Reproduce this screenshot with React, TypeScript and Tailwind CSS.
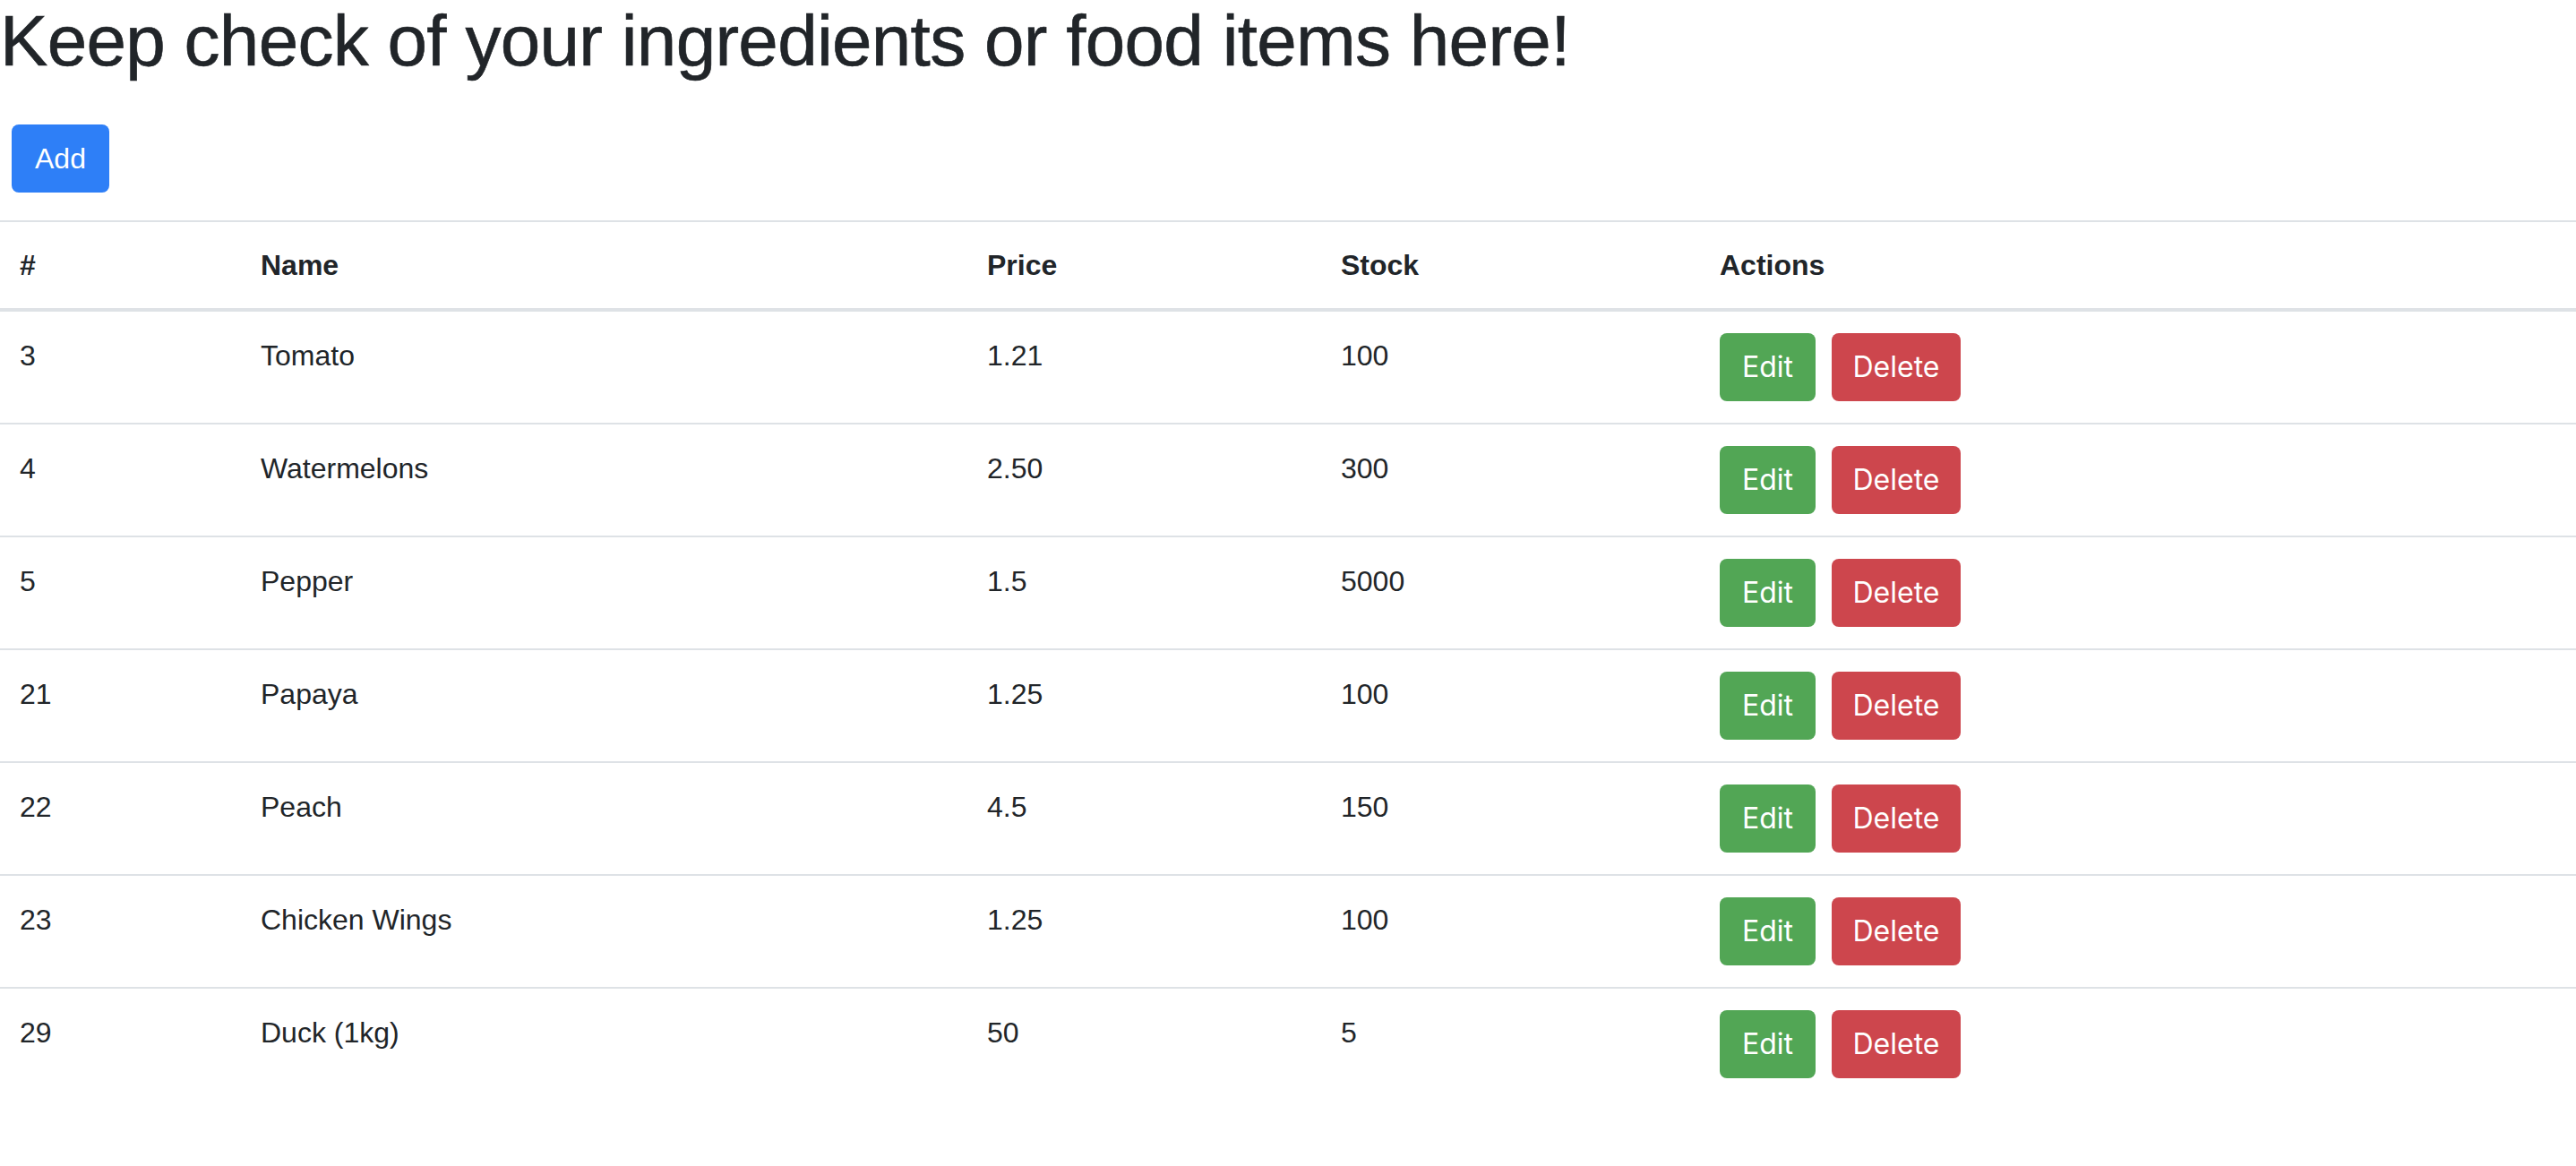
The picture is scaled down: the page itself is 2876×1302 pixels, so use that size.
const items = [
  { id: 3, name: "Tomato", price: "1.21", stock: "100" },
  { id: 4, name: "Watermelons", price: "2.50", stock: "300" },
  { id: 5, name: "Pepper", price: "1.5", stock: "5000" },
  { id: 21, name: "Papaya", price: "1.25", stock: "100" },
  { id: 22, name: "Peach", price: "4.5", stock: "150" },
  { id: 23, name: "Chicken Wings", price: "1.25", stock: "100" },
  { id: 29, name: "Duck (1kg)", price: "50", stock: "5" },
];

export default function App() {
  return (
    <div className="min-h-screen bg-white text-[#212529] font-['Liberation_Sans',Arial,sans-serif]">
      <h1 className="text-[80px] leading-[96px] font-normal mb-[16px] -mt-[2px] tracking-[-0.7px] [-webkit-text-stroke:0.6px_#212529]">
        Keep check of your ingredients or food items here!
      </h1>

      <button className="ml-[13px] mt-[29px] h-[76px] px-[26px] rounded-[8px] bg-[#2e7ff7] text-white text-[32px] leading-[48px]">
        Add
      </button>

      {/* Items table */}
      <table className="mt-[31px] w-full table-fixed border-collapse text-[32px] leading-[48px]">
        <colgroup>
          <col className="w-[267px]" />
          <col className="w-[811px]" />
          <col className="w-[395px]" />
          <col className="w-[423px]" />
          <col />
        </colgroup>
        <thead>
          <tr className="text-left">
            <th className="border-t-2 border-b-4 border-[#dee2e6] px-[22px] py-[24px] font-bold">#</th>
            <th className="border-t-2 border-b-4 border-[#dee2e6] px-[24px] py-[24px] font-bold">Name</th>
            <th className="border-t-2 border-b-4 border-[#dee2e6] px-[24px] py-[24px] font-bold">Price</th>
            <th className="border-t-2 border-b-4 border-[#dee2e6] px-[24px] py-[24px] font-bold">Stock</th>
            <th className="border-t-2 border-b-4 border-[#dee2e6] px-[24px] py-[24px] font-bold">Actions</th>
          </tr>
        </thead>
        <tbody>
          {items.map((it) => (
            <tr key={it.id} className="align-top">
              <td className="border-t-2 border-[#dee2e6] px-[22px] pt-[25px] pb-[24px]">{it.id}</td>
              <td className="border-t-2 border-[#dee2e6] px-[24px] pt-[25px] pb-[24px]">{it.name}</td>
              <td className="border-t-2 border-[#dee2e6] px-[24px] pt-[25px] pb-[24px]">{it.price}</td>
              <td className="border-t-2 border-[#dee2e6] px-[24px] pt-[25px] pb-[24px]">{it.stock}</td>
              <td className="border-t-2 border-[#dee2e6] px-[24px] py-[24px]">
                <div className="flex gap-[18px] font-['Inter',sans-serif]">
                  <button className="h-[76px] w-[107px] rounded-[8px] bg-[#52a655] text-white text-[32px] leading-[48px]">
                    Edit
                  </button>
                  <button className="h-[76px] w-[144px] rounded-[8px] bg-[#cd464d] text-white text-[32px] leading-[48px]">
                    Delete
                  </button>
                </div>
              </td>
            </tr>
          ))}
        </tbody>
      </table>
    </div>
  );
}
